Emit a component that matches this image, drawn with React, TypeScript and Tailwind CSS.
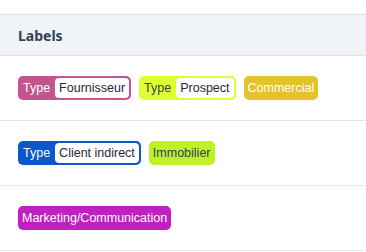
import React from "react";

function TypeBadge({ bg, labelColor, value }: { bg: string; labelColor: string; value: string }) {
  return (
    <span className={`inline-flex items-stretch h-6 rounded-[5px] p-[2px] ${bg}`}>
      <span className={`flex items-center pl-[3px] pr-[5px] ${labelColor}`}>Type</span>
      <span className="flex items-center bg-white rounded-[4px] px-[4px] text-[#1e293b]">{value}</span>
    </span>
  );
}

function Badge({ bg, color, text }: { bg: string; color: string; text: string }) {
  return (
    <span className={`inline-flex items-center h-6 rounded-[5px] px-[4px] ${bg} ${color}`}>{text}</span>
  );
}

export default function App() {
  return (
    <div className="w-[366px] h-[252px] bg-white pt-[14px] text-[12.5px]" style={{ fontFamily: '"Liberation Sans", sans-serif' }}>
      <div className="border-t border-b border-[#dde1e6] bg-[#f0f4f9] h-[42px] flex items-center px-[18px]">
        <span className="font-bold text-[14px] text-[#334155]" style={{ fontFamily: '"Noto Sans", sans-serif' }}>Labels</span>
      </div>
      <div className="flex gap-2 py-5 px-[18px] border-b border-[#e5e7eb]">
        <TypeBadge bg="bg-[#c2558d]" labelColor="text-white" value="Fournisseur" />
        <TypeBadge bg="bg-[#ddff33]" labelColor="text-[#334155]" value="Prospect" />
        <Badge bg="bg-[#e5c22b]" color="text-white" text="Commercial" />
      </div>
      <div className="flex gap-2 py-5 px-[18px] border-b border-[#e5e7eb]">
        <TypeBadge bg="bg-[#0a58ca]" labelColor="text-white" value="Client indirect" />
        <Badge bg="bg-[#bef227]" color="text-[#334155]" text="Immobilier" />
      </div>
      <div className="flex gap-2 py-5 px-[18px] border-b border-[#e5e7eb]">
        <Badge bg="bg-[#c11fc1]" color="text-white" text="Marketing/Communication" />
      </div>
    </div>
  );
}
